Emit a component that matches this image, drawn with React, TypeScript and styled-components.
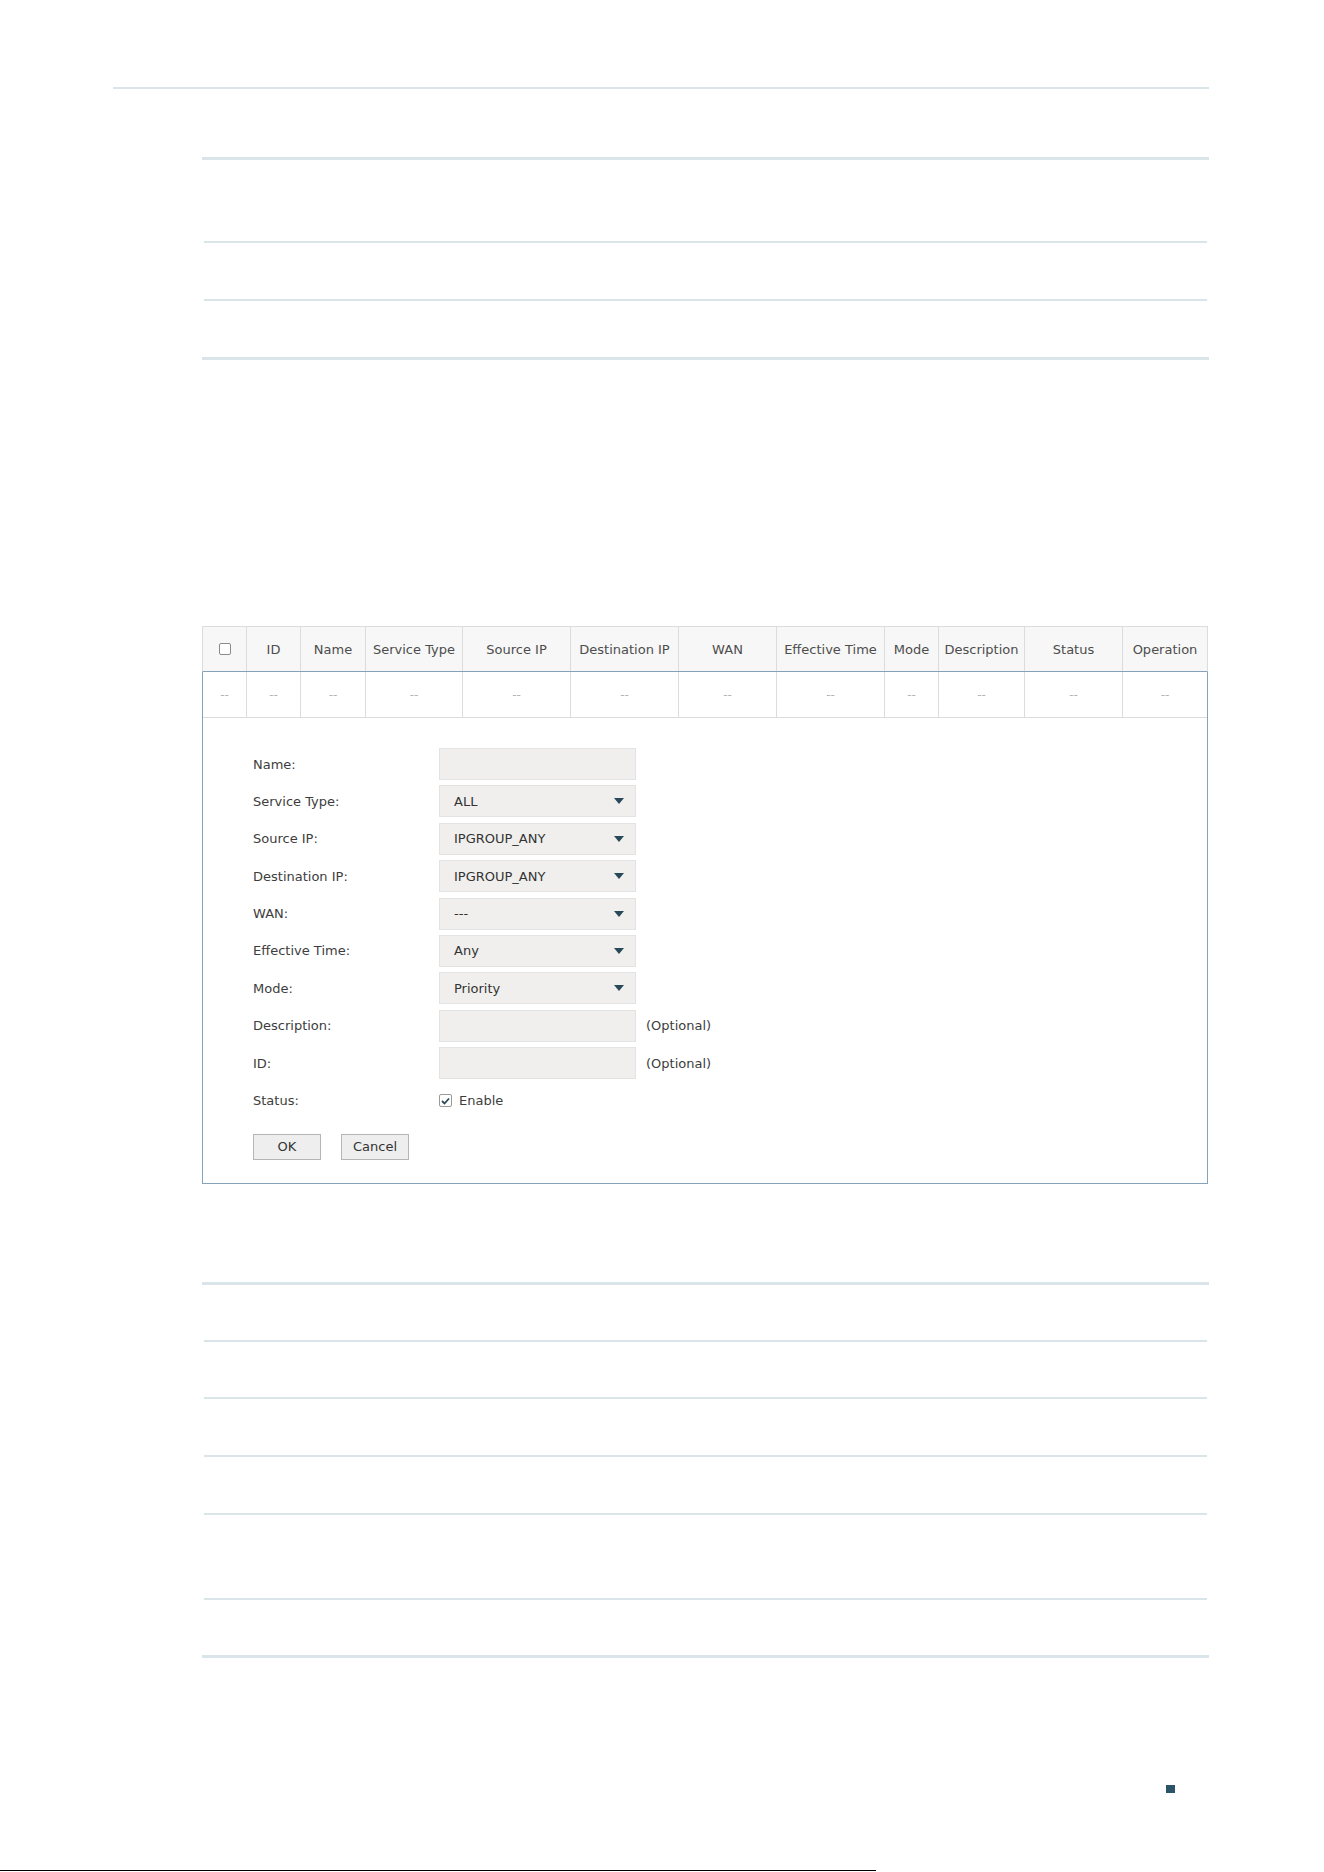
import React from "react";
import styled, { createGlobalStyle } from "styled-components";

const GlobalStyle = createGlobalStyle`
  html, body {
    margin: 0;
    padding: 0;
    background: #ffffff;
  }
  body {
    font-family: "DejaVu Sans", Verdana, sans-serif;
    font-size: 13px;
    color: #3d3d3d;
  }
`;

const RULE = "#d9e5e8";
const GRID = "#dcdcdc";
const BLUE = "#86a2ba";

const Page = styled.div`
  width: 1324px;
  height: 1872px;
  overflow: hidden;
  display: flex;
  flex-direction: column;
  align-items: flex-start;
`;

const TopRule = styled.div`
  margin: 87px 0 0 113px;
  width: 1096px;
  height: 2px;
  background: ${RULE};
`;

const DocTable = styled.div<{ $top: number }>`
  margin: ${(p) => p.$top}px 0 0 202px;
  width: 1007px;
  border-top: 3px solid ${RULE};
  border-bottom: 3px solid ${RULE};
  display: flex;
  flex-direction: column;
`;

const DocRow = styled.div<{ $h: number }>`
  height: ${(p) => p.$h}px;

  & + & {
    margin: 0 2px;
    border-top: 2px solid ${RULE};
  }
`;

const Grid = styled.div`
  margin: 266px 0 0 202px;
  width: 1006px;
  display: flex;
  flex-direction: column;
`;

const cols = "43px 54px 65px 97px 108px 108px 98px 108px 54px 86px 98px 85px";

const HeadRow = styled.div`
  box-sizing: border-box;
  height: 46px;
  display: grid;
  grid-template-columns: ${cols};
  border: 1px solid ${GRID};
  border-bottom-color: ${BLUE};
  background: #f7f7f7;
`;

const Body = styled.div`
  border: 1px solid ${BLUE};
  border-top: none;
`;

const DataRow = styled.div`
  box-sizing: border-box;
  height: 46px;
  display: grid;
  grid-template-columns: ${cols};
  border-bottom: 1px solid ${GRID};
`;

const Cell = styled.div<{ $muted?: boolean }>`
  display: flex;
  align-items: center;
  justify-content: center;
  white-space: nowrap;
  color: ${(p) => (p.$muted ? "#b5b5b5" : "#4d4d4d")};
  font-size: ${(p) => (p.$muted ? "12px" : "13px")};

  & + & {
    border-left: 1px solid ${GRID};
  }
`;

const HeadBox = styled.span`
  box-sizing: border-box;
  width: 12px;
  height: 12px;
  border: 1px solid #8a8a8a;
  border-radius: 2px;
  background: #fff;
`;

const Form = styled.div`
  padding: 30px 0 23px 50px;
  display: flex;
  flex-direction: column;
`;

const Fields = styled.div`
  display: flex;
  flex-direction: column;
  gap: 5.4px;
`;

const Field = styled.div`
  height: 32px;
  display: flex;
  align-items: center;
`;

const Label = styled.span`
  width: 186px;
  color: #3d3d3d;
`;

const TextBox = styled.div`
  box-sizing: border-box;
  width: 197px;
  height: 32px;
  border: 1px solid #e3e3e3;
  background: #f0efee;
`;

const SelectBox = styled(TextBox)`
  display: flex;
  align-items: center;
  justify-content: space-between;
  padding: 0 11px 0 14px;
  color: #333;
`;

const Hint = styled.span`
  margin-left: 10px;
  color: #3d3d3d;
`;

const Check = styled.span`
  box-sizing: border-box;
  width: 13px;
  height: 13px;
  border: 1px solid #9a9a9a;
  border-radius: 2px;
  background: #fff;
  display: flex;
  align-items: center;
  justify-content: center;
  margin-right: 7px;
`;

const Buttons = styled.div`
  margin-top: 17.3px;
  display: flex;
  gap: 20px;
`;

const Button = styled.button`
  box-sizing: border-box;
  width: 68px;
  height: 26px;
  border: 1px solid #b5b5b5;
  background: #eeeeee;
  font-family: inherit;
  font-size: 13px;
  color: #333;
  padding: 0;
`;

const Marker = styled.div`
  margin: 127px 0 0 1166px;
  width: 9px;
  height: 8px;
  background: #2c5468;
`;

const BottomLine = styled.div`
  margin-top: 77px;
  width: 876px;
  height: 1px;
  background: #000;
`;

const Arrow = () => (
  <svg width="10" height="6" viewBox="0 0 10 6">
    <path d="M0 0 L10 0 L5 6 Z" fill="#27495a" />
  </svg>
);

const Tick = () => (
  <svg width="9" height="8" viewBox="0 0 9 8">
    <path d="M1 4 L3.5 6.5 L8 1.5" fill="none" stroke="#2b4a5a" strokeWidth="1.8" />
  </svg>
);

const headers = [
  "ID",
  "Name",
  "Service Type",
  "Source IP",
  "Destination IP",
  "WAN",
  "Effective Time",
  "Mode",
  "Description",
  "Status",
  "Operation",
];

const selects: [string, string][] = [
  ["Service Type:", "ALL"],
  ["Source IP:", "IPGROUP_ANY"],
  ["Destination IP:", "IPGROUP_ANY"],
  ["WAN:", "---"],
  ["Effective Time:", "Any"],
  ["Mode:", "Priority"],
];

export default function App() {
  return (
    <Page>
      <GlobalStyle />
      <TopRule />

      <DocTable $top={68}>
        <DocRow $h={81} />
        <DocRow $h={56} />
        <DocRow $h={56} />
      </DocTable>

      <Grid>
        <HeadRow>
          <Cell>
            <HeadBox />
          </Cell>
          {headers.map((h) => (
            <Cell key={h}>{h}</Cell>
          ))}
        </HeadRow>
        <Body>
          <DataRow>
            {Array.from({ length: 12 }).map((_, i) => (
              <Cell key={i} $muted>
                --
              </Cell>
            ))}
          </DataRow>
          <Form>
            <Fields>
              <Field>
                <Label>Name:</Label>
                <TextBox />
              </Field>
              {selects.map(([label, value]) => (
                <Field key={label}>
                  <Label>{label}</Label>
                  <SelectBox>
                    <span>{value}</span>
                    <Arrow />
                  </SelectBox>
                </Field>
              ))}
              <Field>
                <Label>Description:</Label>
                <TextBox />
                <Hint>(Optional)</Hint>
              </Field>
              <Field>
                <Label>ID:</Label>
                <TextBox />
                <Hint>(Optional)</Hint>
              </Field>
              <Field>
                <Label>Status:</Label>
                <Check>
                  <Tick />
                </Check>
                <span>Enable</span>
              </Field>
            </Fields>
            <Buttons>
              <Button>OK</Button>
              <Button>Cancel</Button>
            </Buttons>
          </Form>
        </Body>
      </Grid>

      <DocTable $top={98}>
        <DocRow $h={55} />
        <DocRow $h={55} />
        <DocRow $h={56} />
        <DocRow $h={56} />
        <DocRow $h={83} />
        <DocRow $h={55} />
      </DocTable>

      <Marker />
      <BottomLine />
    </Page>
  );
}
